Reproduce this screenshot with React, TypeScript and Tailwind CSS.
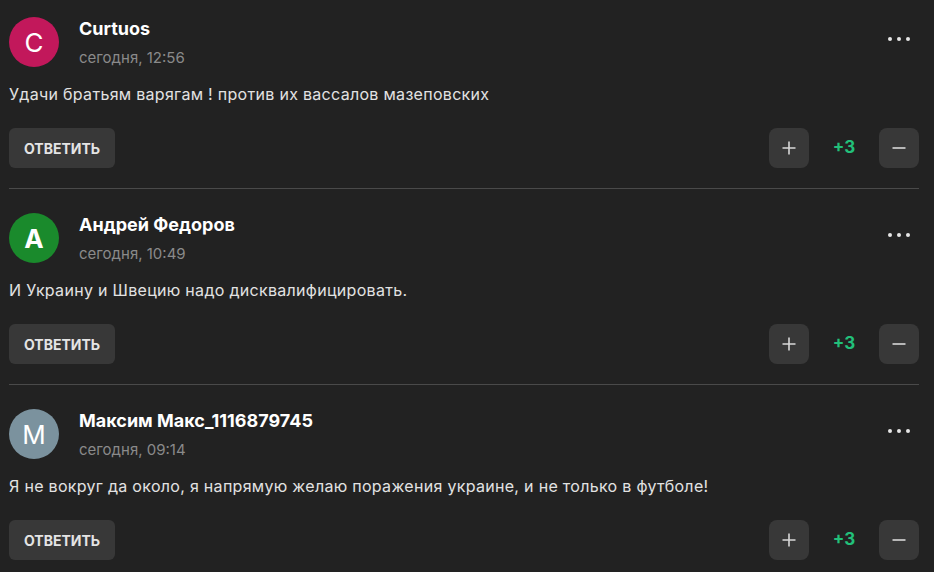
import React from "react";

interface Comment {
  id: number;
  author: string;
  initial: string;
  avatarClass: string;
  time: string;
  text: string;
  rating: string;
}

const comments: Comment[] = [
  {
    id: 1,
    author: "Curtuos",
    initial: "C",
    avatarClass: "bg-[#c2185b] font-normal",
    time: "сегодня, 12:56",
    text: "Удачи братьям варягам ! против их вассалов мазеповских",
    rating: "+3",
  },
  {
    id: 2,
    author: "Андрей Федоров",
    initial: "A",
    avatarClass: "bg-[#1a8a2c] font-bold",
    time: "сегодня, 10:49",
    text: "И Украину и Швецию надо дисквалифицировать.",
    rating: "+3",
  },
  {
    id: 3,
    author: "Максим Макс_1116879745",
    initial: "M",
    avatarClass: "bg-[#7b929e] font-normal",
    time: "сегодня, 09:14",
    text: "Я не вокруг да около, я напрямую желаю поражения украине, и не только в футболе!",
    rating: "+3",
  },
];

function PlusIcon() {
  return (
    <svg width="16" height="16" viewBox="0 0 16 16" fill="none">
      <path d="M8 1.5v13M1.5 8h13" stroke="#d8d8d8" strokeWidth="1.6" />
    </svg>
  );
}

function MinusIcon() {
  return (
    <svg width="16" height="16" viewBox="0 0 16 16" fill="none">
      <path d="M1.5 8h13" stroke="#d8d8d8" strokeWidth="1.6" />
    </svg>
  );
}

function CommentItem({ comment, first }: { comment: Comment; first: boolean }) {
  return (
    <div className={`${first ? "pt-[17px]" : "pt-[24px]"} pb-[20px] border-b border-[#4a4a4a]`}>
      {/* Header */}
      <div className="flex items-start">
        <div
          className={`w-[50px] h-[50px] rounded-full flex items-center justify-center text-white text-[26px] shrink-0 ${comment.avatarClass}`}
        >
          {comment.initial}
        </div>
        <div className="ml-[20px] flex-1">
          <div className="text-[18px] leading-[24px] font-bold text-white">
            {comment.author}
          </div>
          <div className="mt-[7px] text-[15px] leading-[20px] text-[#8a8a8a]">
            {comment.time}
          </div>
        </div>
        <button className="mt-[12px] mr-[9px] flex gap-[5px] items-center h-[20px]">
          <span className="w-[4px] h-[4px] rounded-full bg-[#e6e6e6]" />
          <span className="w-[4px] h-[4px] rounded-full bg-[#e6e6e6]" />
          <span className="w-[4px] h-[4px] rounded-full bg-[#e6e6e6]" />
        </button>
      </div>

      {/* Body */}
      <p className="mt-[14px] text-[16px] leading-[24px] tracking-[0.3px] text-[#e2e2e2]">
        {comment.text}
      </p>

      {/* Actions */}
      <div className="mt-[22px] flex items-center justify-between">
        <button className="h-[40px] px-[15px] rounded-[6px] bg-[#383838] text-[#e4e4e4] text-[14px] font-bold uppercase">
          Ответить
        </button>
        <div className="flex items-center">
          <button className="w-[40px] h-[40px] rounded-[8px] bg-[#383838] flex items-center justify-center">
            <PlusIcon />
          </button>
          <span className="w-[70px] text-center text-[17px] font-bold text-[#22c07a]">
            {comment.rating}
          </span>
          <button className="w-[40px] h-[40px] rounded-[8px] bg-[#383838] flex items-center justify-center">
            <MinusIcon />
          </button>
        </div>
      </div>
    </div>
  );
}

export default function App() {
  return (
    <div
      className="w-[934px] h-[572px] overflow-hidden bg-[#222222] pl-[9px] pr-[15px]"
      style={{ fontFamily: "Inter, 'Liberation Sans', sans-serif" }}
    >
      {comments.map((c, i) => (
        <CommentItem key={c.id} comment={c} first={i === 0} />
      ))}
    </div>
  );
}
